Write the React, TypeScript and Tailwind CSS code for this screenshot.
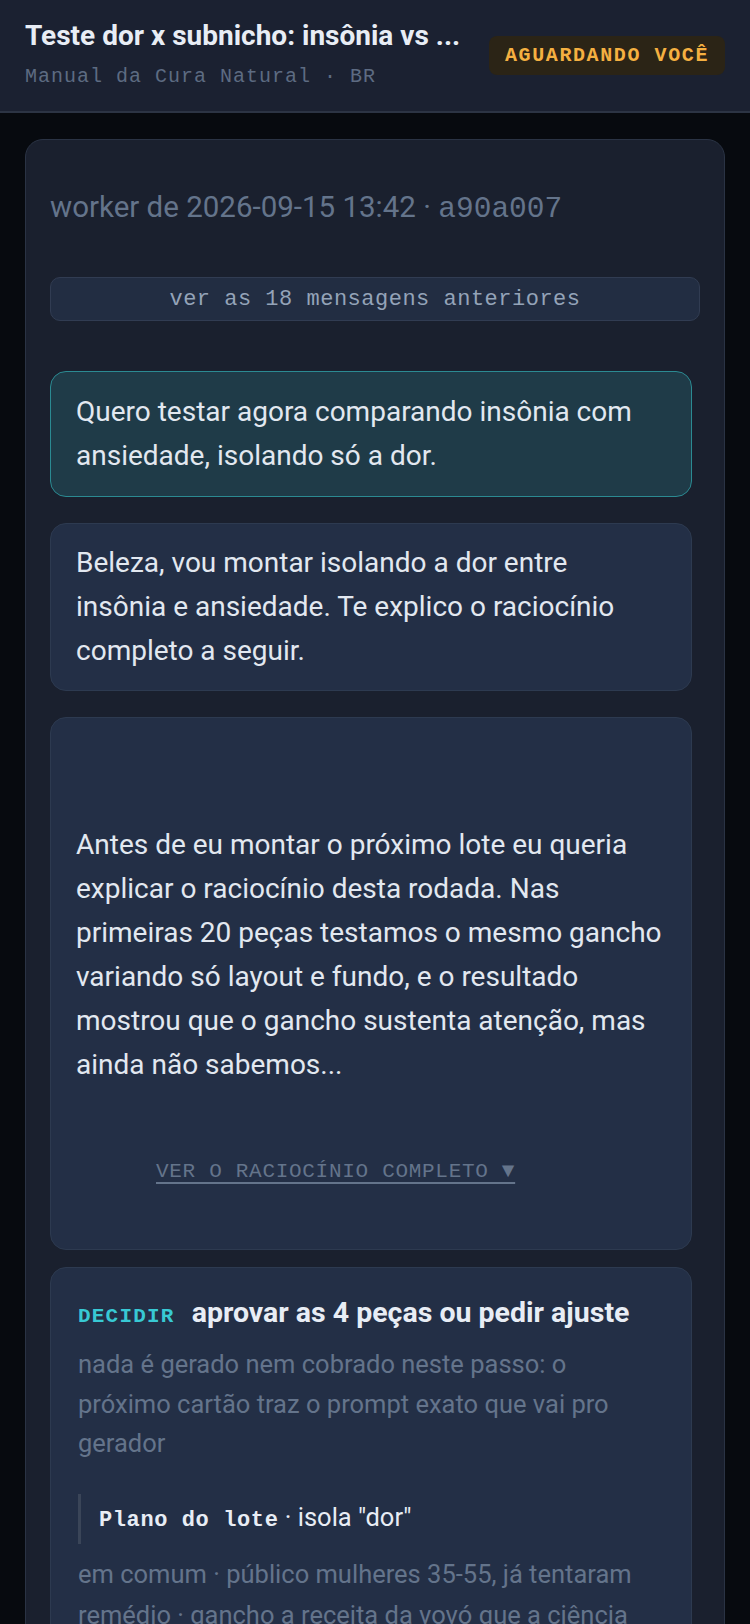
const lines2 = [
  'Antes de eu montar o próximo lote eu queria',
  'explicar o raciocínio desta rodada. Nas',
  'primeiras 20 peças testamos o mesmo gancho',
  'variando só layout e fundo, e o resultado',
  'mostrou que o gancho sustenta atenção, mas',
  'ainda não sabemos...',
]

export default function App() {
  return (
    <div className="min-h-screen bg-[#070a0f] font-['Roboto',sans-serif]">
      <header className="h-[113px] bg-[#1b2131] border-b-2 border-[#2c3444] px-[25px] flex items-center gap-4">
        <div className="flex-1 min-w-0 pb-[2px]">
          <h1 className="text-[28px] leading-[34px] font-bold text-[#e8edf5] whitespace-nowrap">
            Teste dor x subnicho: insônia vs ...
          </h1>
          <p className="mt-[10px] font-['Liberation_Mono',monospace] text-[20px] leading-[28px] tracking-[1px] text-[#5d6b82]">
            Manual da Cura Natural · BR
          </p>
        </div>
        <span className="shrink-0 h-[39px] px-[16px] rounded-[8px] bg-[#2b2416] text-[#f5b041] font-['Liberation_Mono',monospace] font-bold text-[20px] tracking-[1.6px] flex items-center">
          AGUARDANDO VOCÊ
        </span>
      </header>

      <main className="px-[25px] pt-[26px]">
        <section className="rounded-[18px] border border-[#2a3344] bg-[#1a202e] pt-[47px] px-[24px] pb-10">
          <p className="text-[29.5px] leading-[40px] text-[#64748b] whitespace-nowrap">
            worker de 2026-09-15 13:42 · <span className="font-['Liberation_Mono',monospace]">a90a007</span>
          </p>

          <button className="mt-[48px] w-full h-[44px] rounded-[10px] border border-[#313c52] bg-[#222d42] font-['Liberation_Mono',monospace] text-[22px] tracking-[0.5px] text-[#94a3b8]">
            ver as 18 mensagens anteriores
          </button>

          <div className="mt-[50px] pr-[8px]">
            <div className="rounded-[16px] border border-[#2b8a92] bg-[#1f3b48] px-[25px] py-[18px] text-[28px] leading-[44px] text-[#e2e8f0]">
              <div className="whitespace-nowrap">Quero testar agora comparando insônia com</div>
              <div className="whitespace-nowrap">ansiedade, isolando só a dor.</div>
            </div>

            <div className="mt-[26px] rounded-[16px] border border-[#2d3a50] bg-[#232f46] px-[25px] py-[17px] text-[28px] leading-[44px] text-[#e2e8f0]">
              <div className="whitespace-nowrap">Beleza, vou montar isolando a dor entre</div>
              <div className="whitespace-nowrap">insônia e ansiedade. Te explico o raciocínio</div>
              <div className="whitespace-nowrap">completo a seguir.</div>
            </div>

            <div className="mt-[26px] rounded-[16px] border border-[#2d3a50] bg-[#232f46] px-[25px] py-[17px] text-[28px] leading-[44px] text-[#e2e8f0]">
              <div className="h-[88px]" />
              {lines2.map((l) => (
                <div key={l} className="whitespace-nowrap">{l}</div>
              ))}
              <div className="mt-[59px] mb-[38px] ml-[80px] leading-[44px]">
                <button className="font-['Liberation_Mono',monospace] text-[21px] tracking-[0.7px] text-[#64748b] underline underline-offset-[5px] decoration-[2px]">
                  VER O RACIOCÍNIO COMPLETO ▼
                </button>
              </div>
            </div>

            <div className="mt-[17px] rounded-[16px] border border-[#2d3a50] bg-[#232f46] px-[27px] pt-[27px] pb-8">
              <div className="flex items-baseline gap-[17px] leading-[36px] whitespace-nowrap">
                <span className="font-['Liberation_Mono',monospace] font-bold text-[21px] tracking-[1.2px] text-[#38c9d4]">
                  DECIDIR
                </span>
                <span className="text-[28.5px] font-bold text-[#e8edf5]">aprovar as 4 peças ou pedir ajuste</span>
              </div>
              <div className="mt-[10px] text-[25.5px] leading-[39.5px] text-[#64748b]">
                <div className="whitespace-nowrap">nada é gerado nem cobrado neste passo: o</div>
                <div className="whitespace-nowrap">próximo cartão traz o prompt exato que vai pro</div>
                <div className="whitespace-nowrap">gerador</div>
              </div>

              <div className="mt-[30px] border-l-[3px] border-[#3a4558] pl-[18px] py-[6px] leading-[35px] whitespace-nowrap text-[#e8edf5]">
                <span className="font-['Liberation_Mono',monospace] font-bold text-[22px] tracking-[0.6px]">Plano do lote</span>
                <span className="text-[25.5px]"> · isola "dor"</span>
              </div>

              <div className="mt-[10px] text-[25.5px] leading-[41px] text-[#64748b]">
                <div className="whitespace-nowrap">em comum · público mulheres 35-55, já tentaram</div>
                <div className="whitespace-nowrap">remédio · gancho a receita da vovó que a ciência</div>
                <div className="whitespace-nowrap">confirmou · formato carrossel 4 peças</div>
              </div>
            </div>
          </div>
        </section>
      </main>
    </div>
  )
}
